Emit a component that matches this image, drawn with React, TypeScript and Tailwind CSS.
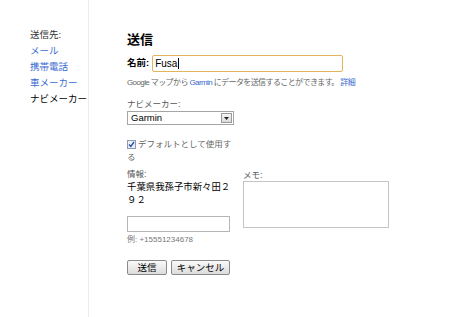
import React from "react";

const font = { fontFamily: '"Liberation Sans", "Noto Sans CJK JP", sans-serif' };

const Sidebar: React.FC = () => {
  const items = ["メール", "携帯電話", "車メーカー"];
  return (
    <div className="w-[89px] shrink-0 border-r border-[#ececec] pl-[30px] pt-[27px] text-[9.5px] leading-[16px]">
      <div className="text-[#333]">送信先:</div>
      {items.map((item) => (
        <div key={item} className="text-[#3a6bd0]">
          {item}
        </div>
      ))}
      <div className="text-black">ナビメーカー</div>
    </div>
  );
};

const Button: React.FC<{ label: string; width: string }> = ({ label, width }) => (
  <button
    className={`${width} h-[15px] rounded-[2px] border border-[#8a8a8a] bg-gradient-to-b from-[#fafafa] to-[#dcdcdc] text-[9.5px] leading-[13px] text-black`}
  >
    {label}
  </button>
);

export default function App() {
  return (
    <div className="flex h-[317px] w-[459px] bg-white" style={font}>
      <Sidebar />
      <div className="flex-1 pl-[38px] pt-[32px]">
        <h1 className="text-[13px] font-bold leading-[16px] text-black">送信</h1>

        <div className="mt-[7px] flex items-center">
          <span className="text-[9.5px] font-bold text-black">名前:</span>
          <div className="ml-[3px] flex h-[17px] w-[191px] items-center rounded-[2px] border border-[#e2b45c] pl-[2px] text-[10px] text-black">
            Fusa<span className="ml-[1px] h-[11px] w-px bg-black" />
          </div>
        </div>

        <div className="mt-[5px] whitespace-nowrap text-[8px] leading-[12px] tracking-[-0.6px] text-[#666]">
          Google マップから <span className="text-[#3a6bd0]">Garmin</span> にデータを送信することができます。{" "}
          <span className="text-[#3a6bd0]">詳細</span>
        </div>

        <div className="mt-[9px] text-[8.5px] leading-[12px] text-[#555]">ナビメーカー:</div>
        <div className="mt-[1px] flex h-[14px] w-[107px] items-center justify-between border border-[#a5a5a5] pl-[3px] pr-[1px]">
          <span className="text-[9.5px] text-black">Garmin</span>
          <span className="flex h-[10px] w-[11px] items-center justify-center border border-[#9a9a9a] bg-gradient-to-b from-[#f5f5f5] to-[#dadada]">
            <svg width="5" height="3" viewBox="0 0 5 3">
              <path d="M0 0h5L2.5 3z" fill="#222" />
            </svg>
          </span>
        </div>

        <div className="mt-[13px] w-[106px] text-[8.5px] leading-[13px] text-[#666]">
          <span className="relative top-[1px] mr-[2px] inline-flex h-[9px] w-[9px] items-center justify-center border border-[#8d9bb3] bg-[#e8eef8] align-baseline">
            <svg width="7" height="7" viewBox="0 0 7 7">
              <path d="M1 3.5l1.8 2L6 1" stroke="#2b4aa8" strokeWidth="1.3" fill="none" />
            </svg>
          </span>
          デフォルトとして使用する
        </div>

        <div className="mt-[4px] flex">
          <div className="w-[106px]">
            <div className="text-[8.5px] leading-[12px] text-[#555]">情報:</div>
            <div className="text-[9.4px] leading-[13px] text-black">千葉県我孫子市新々田２９２</div>
            <div className="mt-[10px] h-[16px] w-[103px] border border-[#b5b5b5]" />
            <div className="mt-[2px] text-[8px] leading-[12px] text-[#777]">例: +15551234678</div>
          </div>
          <div className="ml-[10px] pt-[2px]">
            <div className="text-[8.5px] leading-[11px] text-[#555]">メモ:</div>
            <div className="h-[47px] w-[146px] border border-[#c4c4c4]" />
          </div>
        </div>

        <div className="mt-[14px] flex gap-[4px]">
          <Button label="送信" width="w-[40px]" />
          <Button label="キャンセル" width="w-[59px]" />
        </div>
      </div>
    </div>
  );
}
